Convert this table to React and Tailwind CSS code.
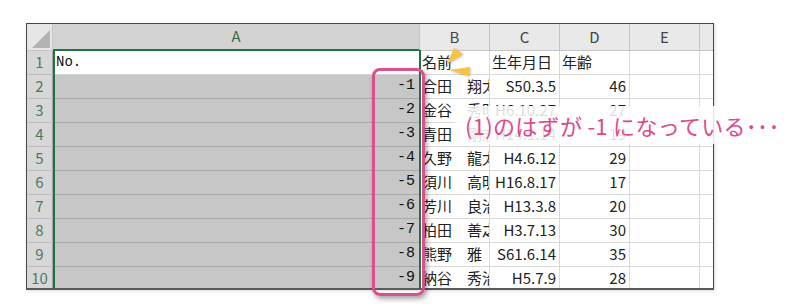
import React from "react";

const rows = [
  { a: "No.", b: "名前", c: "生年月日", d: "年齢", head: true },
  { a: "-1", b: "合田　翔太", c: "S50.3.5", d: "46" },
  { a: "-2", b: "金谷　秀明", c: "H6.10.27", d: "27" },
  { a: "-3", b: "青田　剛志", c: "H14.1.14", d: "19" },
  { a: "-4", b: "久野　龍太", c: "H4.6.12", d: "29" },
  { a: "-5", b: "須川　高明", c: "H16.8.17", d: "17" },
  { a: "-6", b: "芳川　良治", c: "H13.3.8", d: "20" },
  { a: "-7", b: "柏田　善之", c: "H3.7.13", d: "30" },
  { a: "-8", b: "熊野　雅", c: "S61.6.14", d: "35" },
  { a: "-9", b: "納谷　秀治", c: "H5.7.9", d: "28" },
];

const cellFont = { fontFamily: '"Noto Sans CJK JP", "Noto Sans", sans-serif' };
const monoFont = { fontFamily: '"Liberation Mono", "DejaVu Sans Mono", monospace' };

const ColHead = ({ label, w, active }) => (
  <div
    className={`${w} h-full shrink-0 flex items-center justify-center border-r border-[#c4c4c4] text-[15px] ${
      active ? "bg-[#d3d3d3] text-[#3d6b4c] border-b-2 border-b-[#217346]" : "bg-[#e9e9e9] text-[#444] border-b border-b-[#c4c4c4]"
    }`}
  >
    {label}
  </div>
);

const Row = ({ n, row }) => (
  <div className="flex h-[24px] shrink-0" style={cellFont}>
    <div className="w-[26px] shrink-0 bg-[#d7d7d7] border-r border-[#9ea59f] border-b border-b-[#bdbdbd] flex items-center justify-center text-[15px] text-[#4f7a5e]">
      {n}
    </div>
    {row.head ? (
      <div className="w-[367px] shrink-0 bg-white border-b border-[#d4d4d4] flex items-center pl-[3px] text-[14px] text-[#111]" style={monoFont}>
        {row.a}
      </div>
    ) : (
      <div className="w-[367px] shrink-0 bg-[#c7c7c7] border-b border-[#a9a9a9] flex items-center justify-end pr-[5px] text-[15px] text-[#111]" style={monoFont}>
        {row.a}
      </div>
    )}
    <div className="w-[70px] shrink-0 bg-white border-r border-b border-[#d9d9d9] flex items-center pl-[2px] overflow-hidden whitespace-nowrap text-[15px] text-[#222]">
      {row.b}
    </div>
    <div
      className={`w-[70px] shrink-0 bg-white border-r border-b border-[#d9d9d9] flex items-center whitespace-nowrap text-[15px] text-[#222] ${
        row.head ? "pl-[2px]" : "justify-end pr-[3px]"
      }`}
    >
      {row.c}
    </div>
    <div
      className={`w-[70px] shrink-0 bg-white border-r border-b border-[#d9d9d9] flex items-center text-[15px] text-[#222] ${
        row.head ? "pl-[2px]" : "justify-end pr-[3px]"
      }`}
    >
      {row.d}
    </div>
    <div className="w-[70px] shrink-0 bg-white border-r border-b border-[#d9d9d9]" />
    <div className="w-[20px] shrink-0 bg-white border-b border-[#d9d9d9]" />
  </div>
);

export default function App() {
  return (
    <div className="relative w-[800px] h-[308px] bg-white overflow-hidden">
      {/* sheet */}
      <div className="ml-[26px] mt-[23px] w-[688px] h-[267px] border border-[#474747] border-b-2 border-b-[#5a5a5a] overflow-hidden relative flex flex-col shadow-[1px_1px_3px_rgba(0,0,0,0.15)]">
        <div className="flex h-[27px] shrink-0" style={cellFont}>
          <div className="w-[26px] shrink-0 bg-[#e6e6e6] border-r border-b border-[#c4c4c4] relative">
            <svg className="absolute right-[2px] bottom-[2px]" width="18" height="18" viewBox="0 0 18 18">
              <polygon points="18,0 18,18 0,18" fill="#b3b3b3" />
            </svg>
          </div>
          <ColHead label="A" w="w-[367px]" active />
          <ColHead label="B" w="w-[70px]" />
          <ColHead label="C" w="w-[70px]" />
          <ColHead label="D" w="w-[70px]" />
          <ColHead label="E" w="w-[70px]" />
          <ColHead label="" w="w-[20px]" />
        </div>
        {rows.map((row, i) => (
          <Row key={i} n={i + 1} row={row} />
        ))}
        {/* selection frame around column A */}
        <div className="absolute left-[26px] top-[26px] w-[368px] h-[260px] border-l-2 border-r-2 border-[#217346] pointer-events-none" />
      </div>

      {/* pink callout around the numbers */}
      <div className="absolute left-[372px] top-[68px] w-[53px] h-[228px] rounded-[8px] border-[3px] border-[#d9508c] shadow-[2px_3px_5px_rgba(0,0,0,0.35)]" />

      {/* note */}
      <div className="absolute left-[455px] top-[106px] w-[345px] h-[38px] bg-white/85 flex items-center pl-[10px]">
        <span className="text-[22px] font-normal text-[#dc4a8c] whitespace-nowrap leading-none tracking-[0.3px]" style={cellFont}>
          (1)のはずが -1 になっている･･･
        </span>
      </div>

      {/* yellow marks next to 名前 */}
      <svg className="absolute left-[440px] top-[45px]" width="40" height="35" viewBox="0 0 40 35">
        <g fill="#f5c445" style={{ filter: "drop-shadow(1px 1px 1px rgba(0,0,0,0.25))" }}>
          <polygon points="14,3 23,9 7,19" />
          <polygon points="9,25 30,22 29,31" />
        </g>
      </svg>
    </div>
  );
}
